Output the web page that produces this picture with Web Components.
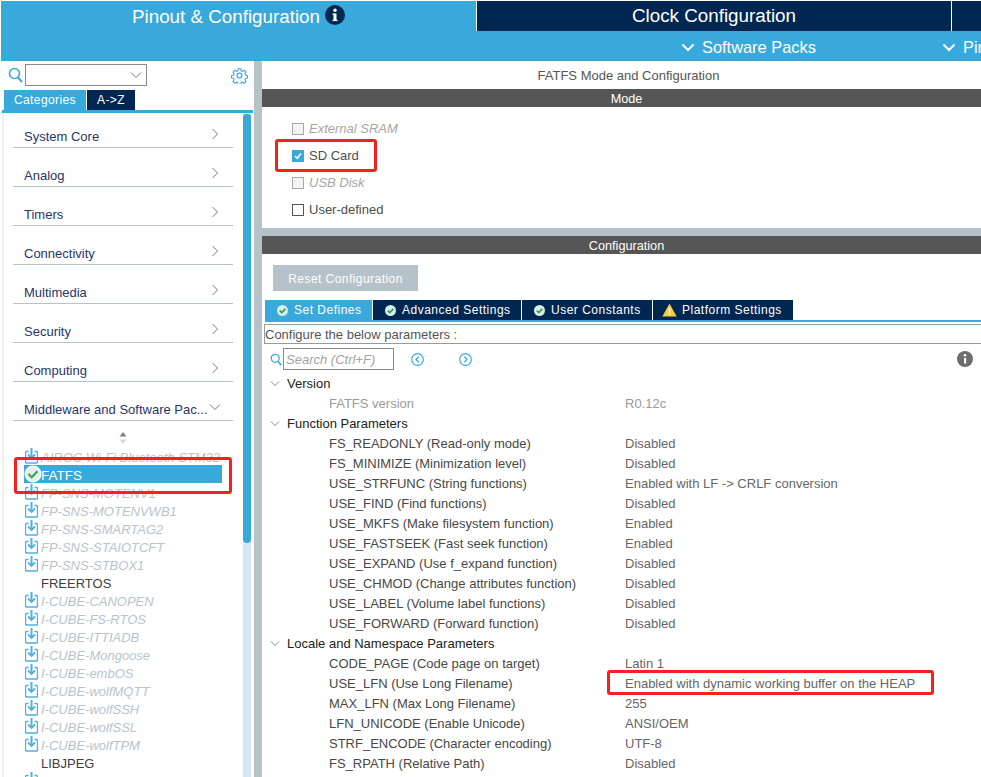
<!DOCTYPE html>
<html>
<head>
<meta charset="utf-8">
<title>FATFS Mode and Configuration</title>
<style>
html, body { margin: 0; height: 100%; overflow: hidden; background: #fff; }
body { font: 13px "Liberation Sans", Arial, sans-serif; color: #444; }
cube-app { width: 981px; height: 777px; }
</style>
</head>
<body>
<cube-app></cube-app>

<script>
const ICONS = {
    chevronRight: '<svg width="8" height="12" viewBox="0 0 8 12"><path d="M1.5 1l5 5-5 5" fill="none" stroke="#6f7a84" stroke-width="1"/></svg>',
    chevronDown: '<svg width="12" height="8" viewBox="0 0 12 8"><path d="M1 1.5l5 5 5-5" fill="none" stroke="#6f7a84" stroke-width="1"/></svg>',
    chevronWhite: '<svg width="14" height="9" viewBox="0 0 14 9"><path d="M1.5 1.5L7 7l5.5-5.5" fill="none" stroke="#fff" stroke-width="2"/></svg>',
    search: '<svg width="15" height="16" viewBox="0 0 15 16"><circle cx="6.5" cy="6.5" r="5" fill="none" stroke="#39a9dc" stroke-width="1.6"/><path d="M10 10.5l4 4.5" stroke="#39a9dc" stroke-width="2"/></svg>',
    gear: '<svg width="17" height="17" viewBox="0 0 24 24" fill="none" stroke="#39a9dc" stroke-width="1.7"><circle cx="12" cy="12" r="3.4"/><path d="M10 1.5h4l.6 3.1 2.1.9 2.6-1.8 2.9 2.9-1.8 2.6.9 2.1 3.1.6v0 4l-3.1.6-.9 2.1 1.8 2.6-2.9 2.9-2.6-1.8-2.1.9-.6 3.1h-4l-.6-3.1-2.1-.9-2.6 1.8-2.9-2.9 1.8-2.6-.9-2.1-3.1-.6v-4l3.1-.6.9-2.1-1.8-2.6 2.9-2.9 2.6 1.8 2.1-.9z" transform="translate(1.2 1.2) scale(.9)"/></svg>',
    download: '<svg width="13" height="16" viewBox="0 0 13 16" fill="none" stroke="#4fb0e0"><path d="M3.500 3.500H1.500a1 1 0 0 0-1 1v9.500a1 1 0 0 0 1 1h10a1 1 0 0 0 1-1V4.500a1 1 0 0 0-1-1H9.500" stroke-width="1.400"/><path d="M6.500 0v9.500" stroke-width="2"/><path d="M3 6.500L6.500 10 10 6.500" stroke-width="1.800"/></svg>',
    okBig: '<svg width="18" height="18" viewBox="0 0 18 18"><circle cx="9" cy="9" r="8.500" fill="#fff"/><circle cx="9" cy="9" r="7" fill="#e4efe8"/><path d="M4.500 9l3.200 3.200L13.500 6.300" fill="none" stroke="#3f9e63" stroke-width="2.200"/></svg>',
    okSmall: '<svg width="11" height="11" viewBox="0 0 11 11"><circle cx="5.500" cy="5.500" r="5.500" fill="#d9efe4"/><path d="M2.800 5.600l2 2 3.500-3.800" fill="none" stroke="#2f9e6e" stroke-width="1.700"/></svg>',
    warn: '<svg width="15" height="14" viewBox="0 0 15 14"><path d="M7.500 .5L14.700 13.500H.3z" fill="#f7c93c"/><path d="M7.500 5v4.500" stroke="#fff" stroke-width="1.800"/><circle cx="7.500" cy="11.300" r="1" fill="#fff"/></svg>',
    info: '<svg width="20" height="20" viewBox="0 0 20 20"><circle cx="10" cy="10" r="10" fill="#002652"/><rect x="8.500" y="8.500" width="3" height="7.500" fill="#fff"/><rect x="7.500" y="8.500" width="2" height="1.300" fill="#fff"/><rect x="7.500" y="14.800" width="5" height="1.300" fill="#fff"/><circle cx="10" cy="5.300" r="1.700" fill="#fff"/></svg>',
    infoGrey: '<svg width="16" height="16" viewBox="0 0 16 16"><circle cx="8" cy="8" r="8" fill="#6d6d6d"/><rect x="7" y="7" width="2.200" height="5.500" fill="#fff"/><circle cx="8" cy="4.300" r="1.300" fill="#fff"/></svg>',
    prev: '<svg width="13" height="13" viewBox="0 0 13 13" fill="none" stroke="#39a9dc"><circle cx="6.500" cy="6.500" r="5.800" stroke-width="1.200"/><path d="M7.800 3.800L5 6.500l2.800 2.700" stroke-width="1.200"/></svg>',
    next: '<svg width="13" height="13" viewBox="0 0 13 13" fill="none" stroke="#39a9dc"><circle cx="6.500" cy="6.500" r="5.800" stroke-width="1.200"/><path d="M5.200 3.800L8 6.500 5.200 9.200" stroke-width="1.200"/></svg>',
    sort: '<svg width="8" height="12" viewBox="0 0 8 12"><path d="M4 0l3.500 4.500h-7z" fill="#77808a"/><path d="M4 12L.5 7.500h7z" fill="#d2d7db"/></svg>'
};

class CubeHeader extends HTMLElement {
    connectedCallback() {
        this.attachShadow({ mode: 'open' });
        this.shadowRoot.innerHTML = `
            <style>
                :host { display: block; margin: 1px 0 0 1px; background: #39a9dc; color: #fff; }
                .tabs { display: grid; grid-template-columns: 475px 474px 1fr; column-gap: 1px; height: 30px; background: #fff; }
                .tab { display: flex; align-items: center; justify-content: center; gap: 5px; font-size: 18.8px; background: #002652; box-sizing: border-box; }
                .tab.on { background: #39a9dc; padding-top: 1px; }
                .tab.on svg { margin-top: -3px; }
                .packs { position: relative; height: 30px; font-size: 16.4px; }
                .drop { position: absolute; top: 7px; display: flex; align-items: center; gap: 7px; white-space: nowrap; }
            </style>
            <div class="tabs">
                <div class="tab on">Pinout &amp; Configuration ${ICONS.info}</div>
                <div class="tab">Clock Configuration</div>
                <div class="tab"></div>
            </div>
            <div class="packs">
                <div class="drop" style="left:680px">${ICONS.chevronWhite}Software Packs</div>
                <div class="drop" style="left:941px">${ICONS.chevronWhite}Pinout</div>
            </div>
        `;
    }
}

class CubeCategory extends HTMLElement {
    connectedCallback() {
        const open = this.hasAttribute('open');
        this.attachShadow({ mode: 'open' });
        this.shadowRoot.innerHTML = `
            <style>
                :host { display: flex; align-items: center; justify-content: space-between; height: 38px; box-sizing: border-box; margin: 0 9px 1px; padding: 16px 14px 0 11px; border-bottom: 1px solid #b6c2c9; color: #28356b; font-size: 13px; white-space: nowrap; }
                svg { margin-top: -5px; }
            </style>
            <slot></slot>${open ? ICONS.chevronDown : ICONS.chevronRight}
        `;
        if (open) this.style.paddingRight = '12px';
    }
}

class CubePack extends HTMLElement {
    connectedCallback() {
        const kind = this.getAttribute('kind') || 'pack';
        const icon = kind === 'pack' ? ICONS.download : kind === 'ok' ? ICONS.okBig : '';
        this.attachShadow({ mode: 'open' });
        this.shadowRoot.innerHTML = `
            <style>
                :host { display: flex; align-items: center; height: 18px; width: 198px; font-size: 13px; white-space: nowrap; position: relative; }
                :host([kind=pack]) { font-style: italic; color: #b9c3cc; }
                :host([kind=plain]) { color: #3e3e3e; }
                :host([kind=ok]) { color: #fff; background: #39a9dc; font-size: 13.5px; }
                .icon { position: absolute; left: 1px; top: 1px; height: 16px; }
                :host([kind=ok]) .icon { left: 0; top: 0; height: 18px; }
                .txt { margin: 2px 0 0 17px; }
            </style>
            <span class="icon">${icon}</span><span class="txt"><slot></slot></span>
        `;
    }
}

class CubeSidebar extends HTMLElement {
    connectedCallback() {
        const cats = ['System Core', 'Analog', 'Timers', 'Connectivity', 'Multimedia', 'Security', 'Computing'];
        const packs = [
            ['pack', 'AIROC Wi-Fi Bluetooth STM32'], ['ok', 'FATFS'], ['pack', 'FP-SNS-MOTENV1'], ['pack', 'FP-SNS-MOTENVWB1'],
            ['pack', 'FP-SNS-SMARTAG2'], ['pack', 'FP-SNS-STAIOTCFT'], ['pack', 'FP-SNS-STBOX1'], ['plain', 'FREERTOS'],
            ['pack', 'I-CUBE-CANOPEN'], ['pack', 'I-CUBE-FS-RTOS'], ['pack', 'I-CUBE-ITTIADB'], ['pack', 'I-CUBE-Mongoose'],
            ['pack', 'I-CUBE-embOS'], ['pack', 'I-CUBE-wolfMQTT'], ['pack', 'I-CUBE-wolfSSH'], ['pack', 'I-CUBE-wolfSSL'],
            ['pack', 'I-CUBE-wolfTPM'], ['plain', 'LIBJPEG'], ['pack', 'LWIP']
        ];
        this.attachShadow({ mode: 'open' });
        this.shadowRoot.innerHTML = `
            <style>
                :host { display: flex; flex-direction: column; width: 254px; min-height: 0; overflow: hidden; }
                .top { display: flex; align-items: center; height: 28px; padding: 0 6px 0 8px; box-sizing: border-box; }
                .combo { display: flex; align-items: center; justify-content: flex-end; width: 122px; height: 22px; margin-left: 2px; padding-right: 4px; box-sizing: border-box; border: 1px solid #8a8a8a; }
                .gear { margin-left: auto; height: 17px; }
                .modes { display: flex; gap: 1px; height: 20px; margin: 1px 0 0 4px; font-size: 12px; letter-spacing: .4px; color: #fff; }
                .modes div { display: flex; align-items: center; justify-content: center; background: #002652; width: 48px; }
                .modes .on { background: #39a9dc; width: 82px; }
                .body { flex: 1; min-height: 0; display: flex; margin: 0 1px 0 2px; border-top: 3px solid #39a9dc; }
                .list { flex: 1; min-width: 0; border-left: 2px solid #f0f0f0; overflow: hidden; }
                .cats { margin-top: -3px; }
                .sort { display: flex; justify-content: center; height: 12px; margin-top: 11px; }
                .packs { margin: 3px 0 0 20px; }
                .bar { width: 8px; margin: 0 2px 0 1px; background: #d7e6f4; }
                .thumb { height: 429px; margin-top: 1px; border-radius: 4px 4px 5px 5px; background: #39a9dc; }
            </style>
            <div class="top">
                ${ICONS.search}
                <div class="combo">${ICONS.chevronDown}</div>
                <span class="gear">${ICONS.gear}</span>
            </div>
            <div class="modes"><div class="on">Categories</div><div>A-&gt;Z</div></div>
            <div class="body">
                <div class="list">
                    <div class="cats">
                        ${cats.map(c => `<cube-category>${c}</cube-category>`).join('')}
                        <cube-category open>Middleware and Software Pac...</cube-category>
                    </div>
                    <div class="sort">${ICONS.sort}</div>
                    <div class="packs">
                        ${packs.map(p => `<cube-pack kind="${p[0]}">${p[1]}</cube-pack>`).join('')}
                    </div>
                </div>
                <div class="bar"><div class="thumb"></div></div>
            </div>
        `;
    }
}

class CubeCheck extends HTMLElement {
    connectedCallback() {
        this.attachShadow({ mode: 'open' });
        this.shadowRoot.innerHTML = `
            <style>
                :host { display: flex; align-items: center; gap: 5px; height: 27px; font-size: 13px; white-space: nowrap; color: #4d4d4d; }
                :host([disabled]) { color: #a6a6a6; font-style: italic; }
                .box { width: 10px; height: 10px; border: 1px solid #555; background: #fff; display: flex; }
                :host([disabled]) .box { border-color: #a9a9a9; background: #f3f3f3; }
                :host([checked]) .box { border-color: #39a9dc; background: #39a9dc; }
            </style>
            <span class="box">${this.hasAttribute('checked') ? '<svg width="10" height="10" viewBox="0 0 10 10"><path d="M2 5l2.200 2.300L8 2.500" fill="none" stroke="#fff" stroke-width="1.500"/></svg>' : ''}</span>
            <slot></slot>
        `;
    }
}

class CubeTabs extends HTMLElement {
    connectedCallback() {
        const tabs = [['Set Defines', 'ok', 107], ['Advanced Settings', 'ok', 148], ['User Constants', 'ok', 130], ['Platform Settings', 'warn', 140]];
        this.attachShadow({ mode: 'open' });
        this.shadowRoot.innerHTML = `
            <style>
                :host { display: block; height: 22px; margin-left: 3px; border-bottom: 2px solid #39a9dc; box-sizing: border-box; }
                .row { display: flex; gap: 1px; height: 20px; }
                .t { display: flex; align-items: center; gap: 6px; padding-left: 12px; box-sizing: border-box; background: #002652; color: #fff; font-size: 12px; letter-spacing: .5px; white-space: nowrap; }
                .t.on { background: #39a9dc; }
                .t:last-child { padding-left: 9px; gap: 5px; }
            </style>
            <div class="row">
                ${tabs.map((t, i) => `<div class="t ${i === 0 ? 'on' : ''}" style="width:${t[2]}px">${t[1] === 'ok' ? ICONS.okSmall : ICONS.warn}${t[0]}</div>`).join('')}
            </div>
        `;
    }
}

class CubeParam extends HTMLElement {
    connectedCallback() {
        this.attachShadow({ mode: 'open' });
        this.shadowRoot.innerHTML = `
            <style>
                :host { display: grid; grid-template-columns: 296px 1fr; height: 20px; align-items: center; padding-left: 67px; font-size: 13px; color: #474747; white-space: nowrap; }
                :host([muted]) { color: #9a9a9a; }
                .v { color: #666; }
                :host([muted]) .v { color: #9a9a9a; }
            </style>
            <span>${this.getAttribute('name')}</span><span class="v">${this.getAttribute('value')}</span>
        `;
    }
}

class CubeGroup extends HTMLElement {
    connectedCallback() {
        this.attachShadow({ mode: 'open' });
        this.shadowRoot.innerHTML = `
            <style>
                :host { display: block; }
                .head { display: flex; align-items: center; gap: 7px; height: 20px; padding-left: 8px; font-size: 13px; color: #222; white-space: nowrap; }
                .head svg { width: 10px; height: 7px; }
            </style>
            <div class="head">${ICONS.chevronDown}${this.getAttribute('label')}</div>
            <slot></slot>
        `;
    }
}

class CubeMain extends HTMLElement {
    connectedCallback() {
        this.attachShadow({ mode: 'open' });
        this.shadowRoot.innerHTML = `
            <style>
                :host { display: flex; flex-direction: column; flex: none; width: 729px; background: #b6c2c9; overflow: hidden; }
                .title { height: 28px; display: flex; align-items: center; justify-content: center; padding-left: 4px; background: #fff; font-size: 13px; color: #555; }
                .bar { height: 18px; padding-top: 2px; box-sizing: border-box; display: flex; align-items: center; justify-content: center; background: #555; color: #fff; font-size: 12.7px; }
                .mode { height: 121px; padding: 8px 0 0 30px; box-sizing: border-box; background: #fff; margin-bottom: 8px; }
                .cfg { flex: 1; min-height: 0; background: #fff; }
                .reset { display: flex; align-items: center; justify-content: center; width: 145px; height: 26px; padding-top: 2px; box-sizing: border-box; margin: 11px 0 9px 11px; background: #b6c2c9; color: #fff; font-size: 12px; letter-spacing: .45px; }
                .hint { height: 20px; margin: 2px 0 0 2px; display: flex; align-items: center; border: 1px solid #9a9a9a; border-right: 0; box-sizing: border-box; font-size: 13px; color: #555; white-space: nowrap; }
                .find { display: flex; align-items: center; height: 22px; margin: 4px 0 3px; padding: 0 18px 0 8px; }
                .find > svg:first-child { width: 12px; height: 13px; }
                .field { width: 111px; height: 22px; margin-left: 1px; padding-left: 2px; box-sizing: border-box; border: 1px solid #8a8a8a; display: flex; align-items: center; font-style: italic; color: #a3a3a3; font-size: 13px; }
                .prev { margin-left: 17px; height: 13px; }
                .next { margin-left: 35px; height: 13px; }
                .about { margin-left: auto; height: 16px; }
            </style>
            <div class="title">FATFS Mode and Configuration</div>
            <div class="bar">Mode</div>
            <div class="mode">
                <cube-check disabled>External SRAM</cube-check>
                <cube-check checked>SD Card</cube-check>
                <cube-check disabled>USB Disk</cube-check>
                <cube-check>User-defined</cube-check>
            </div>
            <div class="bar">Configuration</div>
            <div class="cfg">
                <div class="reset">Reset Configuration</div>
                <cube-tabs></cube-tabs>
                <div class="hint">Configure the below parameters :</div>
                <div class="find">
                    ${ICONS.search}
                    <div class="field">Search (Ctrl+F)</div>
                    <span class="prev">${ICONS.prev}</span>
                    <span class="next">${ICONS.next}</span>
                    <span class="about">${ICONS.infoGrey}</span>
                </div>
                <cube-group label="Version">
                    <cube-param muted name="FATFS version" value="R0.12c"></cube-param>
                </cube-group>
                <cube-group label="Function Parameters">
                    <cube-param name="FS_READONLY (Read-only mode)" value="Disabled"></cube-param>
                    <cube-param name="FS_MINIMIZE (Minimization level)" value="Disabled"></cube-param>
                    <cube-param name="USE_STRFUNC (String functions)" value="Enabled with LF -&gt; CRLF conversion"></cube-param>
                    <cube-param name="USE_FIND (Find functions)" value="Disabled"></cube-param>
                    <cube-param name="USE_MKFS (Make filesystem function)" value="Enabled"></cube-param>
                    <cube-param name="USE_FASTSEEK (Fast seek function)" value="Enabled"></cube-param>
                    <cube-param name="USE_EXPAND (Use f_expand function)" value="Disabled"></cube-param>
                    <cube-param name="USE_CHMOD (Change attributes function)" value="Disabled"></cube-param>
                    <cube-param name="USE_LABEL (Volume label functions)" value="Disabled"></cube-param>
                    <cube-param name="USE_FORWARD (Forward function)" value="Disabled"></cube-param>
                </cube-group>
                <cube-group label="Locale and Namespace Parameters">
                    <cube-param name="CODE_PAGE (Code page on target)" value="Latin 1"></cube-param>
                    <cube-param name="USE_LFN (Use Long Filename)" value="Enabled with dynamic working buffer on the HEAP"></cube-param>
                    <cube-param name="MAX_LFN (Max Long Filename)" value="255"></cube-param>
                    <cube-param name="LFN_UNICODE (Enable Unicode)" value="ANSI/OEM"></cube-param>
                    <cube-param name="STRF_ENCODE (Character encoding)" value="UTF-8"></cube-param>
                    <cube-param name="FS_RPATH (Relative Path)" value="Disabled"></cube-param>
                </cube-group>
            </div>
        `;
    }
}

// red boxes drawn over the screenshot
class CubeMark extends HTMLElement {
    connectedCallback() {
        const [x, y, w, h] = this.getAttribute('box').split(',');
        this.attachShadow({ mode: 'open' });
        this.shadowRoot.innerHTML = `
            <style>
                :host { display: block; position: absolute; box-sizing: border-box; border: 3px solid #f6201c; border-radius: 3px; pointer-events: none; }
            </style>
        `;
        this.style.cssText = `left:${x}px;top:${y}px;width:${w}px;height:${h}px`;
    }
}

class CubeApp extends HTMLElement {
    connectedCallback() {
        this.attachShadow({ mode: 'open' });
        this.shadowRoot.innerHTML = `
            <style>
                :host { display: flex; flex-direction: column; position: relative; overflow: hidden; }
                .split { flex: 1; min-height: 0; display: flex; }
                .gap { flex: none; width: 8px; background: #b6c2c9; }
                cube-sidebar { flex: none; }
            </style>
            <cube-header></cube-header>
            <div class="split">
                <cube-sidebar></cube-sidebar>
                <div class="gap"></div>
                <cube-main></cube-main>
            </div>
            <cube-mark box="275,139,102,33"></cube-mark>
            <cube-mark box="14,457,218,37"></cube-mark>
            <cube-mark box="607,670,327,25"></cube-mark>
        `;
    }
}

customElements.define('cube-header', CubeHeader);
customElements.define('cube-category', CubeCategory);
customElements.define('cube-pack', CubePack);
customElements.define('cube-sidebar', CubeSidebar);
customElements.define('cube-check', CubeCheck);
customElements.define('cube-tabs', CubeTabs);
customElements.define('cube-param', CubeParam);
customElements.define('cube-group', CubeGroup);
customElements.define('cube-main', CubeMain);
customElements.define('cube-mark', CubeMark);
customElements.define('cube-app', CubeApp);
</script>
</body>
</html>
